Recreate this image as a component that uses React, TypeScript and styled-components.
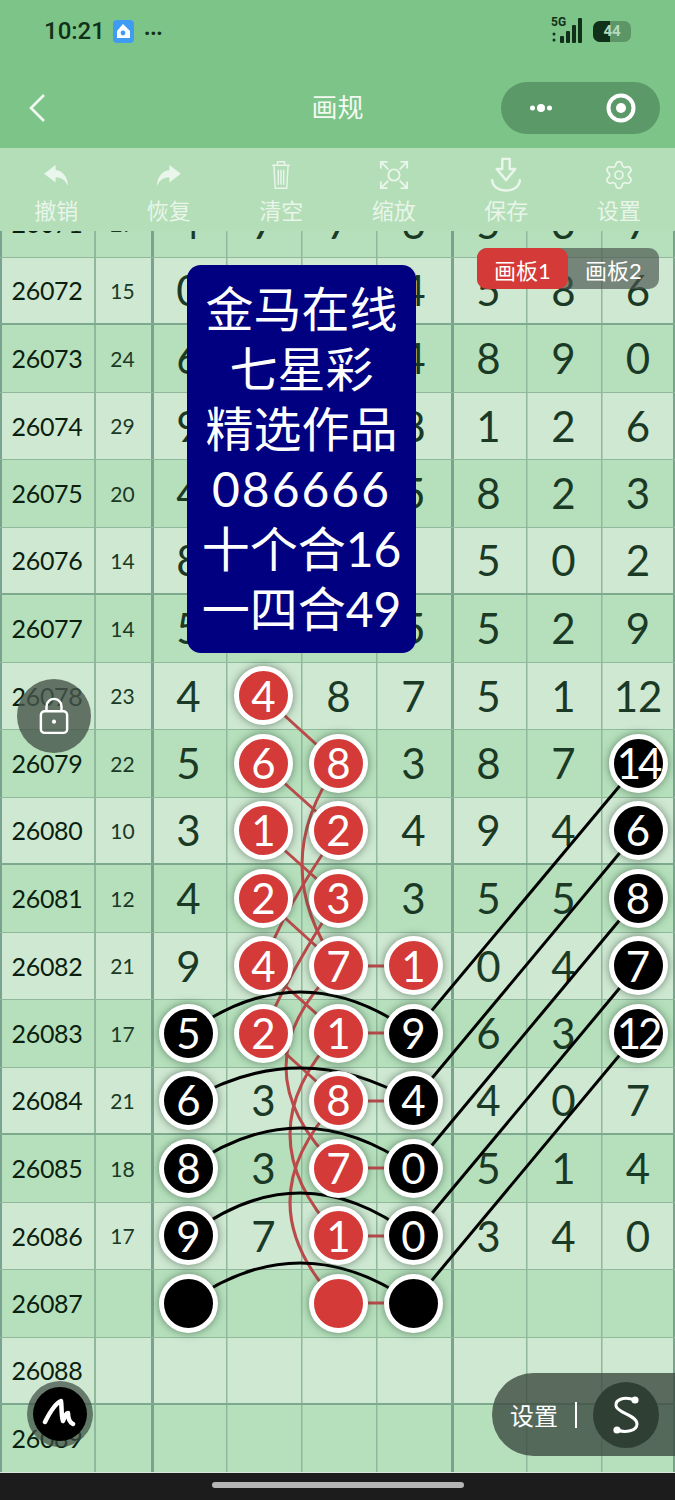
import React from 'react';
import styled, { createGlobalStyle } from 'styled-components';
import { Settings } from 'lucide-react';

const GlobalStyle = createGlobalStyle`
  html, body {
    margin: 0;
    padding: 0;
    background: #1c1c1c;
  }
  * {
    box-sizing: border-box;
  }
`;

const FONT = `Lato, "Noto Sans CJK SC", sans-serif`;

type Mark = { tone: 'red' | 'black'; value?: number };
type CellValue = number | null | Mark;

const r = (value?: number): Mark => ({ tone: 'red', value });
const k = (value?: number): Mark => ({ tone: 'black', value });

// cells under the notice are not visible, so they stay empty
const ROWS: { id: number; sum?: number; cells: CellValue[] }[] = [
  { id: 26071, sum: 27, cells: [4, 7, 7, 6, 5, 3, 7] },
  { id: 26072, sum: 15, cells: [0, null, null, 4, 5, 8, 6] },
  { id: 26073, sum: 24, cells: [6, null, null, 4, 8, 9, 0] },
  { id: 26074, sum: 29, cells: [9, null, null, 8, 1, 2, 6] },
  { id: 26075, sum: 20, cells: [4, null, null, 5, 8, 2, 3] },
  { id: 26076, sum: 14, cells: [8, null, null, null, 5, 0, 2] },
  { id: 26077, sum: 14, cells: [5, null, null, 5, 5, 2, 9] },
  { id: 26078, sum: 23, cells: [4, r(4), 8, 7, 5, 1, 12] },
  { id: 26079, sum: 22, cells: [5, r(6), r(8), 3, 8, 7, k(14)] },
  { id: 26080, sum: 10, cells: [3, r(1), r(2), 4, 9, 4, k(6)] },
  { id: 26081, sum: 12, cells: [4, r(2), r(3), 3, 5, 5, k(8)] },
  { id: 26082, sum: 21, cells: [9, r(4), r(7), r(1), 0, 4, k(7)] },
  { id: 26083, sum: 17, cells: [k(5), r(2), r(1), k(9), 6, 3, k(12)] },
  { id: 26084, sum: 21, cells: [k(6), 3, r(8), k(4), 4, 0, 7] },
  { id: 26085, sum: 18, cells: [k(8), 3, r(7), k(0), 5, 1, 4] },
  { id: 26086, sum: 17, cells: [k(9), 7, r(1), k(0), 3, 4, 0] },
  { id: 26087, cells: [k(), null, r(), k(), null, null, null] },
  { id: 26088, cells: [null, null, null, null, null, null, null] },
  { id: 26089, cells: [null, null, null, null, null, null, null] },
];

const TOOLS = ['撤销', '恢复', '清空', '缩放', '保存', '设置'];

const BOARD_TOP = 231;
const y = (pageY: number) => pageY - BOARD_TOP;

// links between the marked balls, in page coordinates
const RED_PATHS = [
  'M263 696 L338 764',
  'M263 764 L338 831',
  'M263 831 L338 898',
  'M263 898 L338 966',
  'M263 966 L338 1033',
  'M263 1033 L338 1101',
  'M338 966 L413 966',
  'M338 1033 L413 1033',
  'M338 1101 L413 1101',
  'M338 1168 L413 1168',
  'M338 1236 L413 1236',
  'M338 1303 L413 1303',
  'M338 764 Q266 865 338 966',
  'M338 831 Q282 912 263 966',
  'M338 898 Q288 975 263 1033',
  'M338 966 Q234 1067 338 1168',
  'M338 1033 Q242 1134 338 1236',
  'M338 1101 Q242 1202 338 1303',
];

const BLACK_PATHS = [
  'M188 1033 Q300 951 413 1033',
  'M188 1101 Q300 1035 413 1101',
  'M188 1168 Q300 1088 413 1168',
  'M188 1236 Q300 1150 413 1236',
  'M188 1303 Q300 1223 413 1303',
  'M413 1033 L638 764',
  'M413 1101 L638 831',
  'M413 1168 L638 898',
  'M413 1236 L638 966',
  'M413 1303 L638 1033',
];

const shift = (d: string) =>
  d.replace(/(\d+) (\d+)/g, (_, a, b) => `${a} ${y(Number(b))}`);

const BoardCell = ({ value }: { value: CellValue }) => {
  if (value === null) return null;
  if (typeof value === 'number') return <>{value}</>;
  return (
    <Ball $tone={value.tone} $wide={(value.value ?? 0) > 9}>
      {value.value}
    </Ball>
  );
};

const App: React.FC = () => {
  return (
    <Screen>
      <GlobalStyle />
      <Header>
        <StatusBar>
          <StatusLeft>
            <Clock>10:21</Clock>
            <AppBadge>
              <svg width="16" height="16" viewBox="0 0 16 16">
                <path d="M8 1 L15 8 V15 H2 V8 Z" fill="#fff" />
                <circle cx="8" cy="10" r="2.4" fill="#3f9cf2" />
              </svg>
            </AppBadge>
            <MoreDots>···</MoreDots>
          </StatusLeft>
          <StatusRight>
            <Signal>
              <SignalLabel>5G</SignalLabel>
              <svg width="36" height="26" viewBox="0 0 36 26">
                <circle cx="3" cy="16" r="1.5" fill="#10301a" />
                <circle cx="3" cy="22" r="1.5" fill="#10301a" />
                <rect x="9" y="18" width="4" height="7" rx="1" fill="#10301a" />
                <rect x="15" y="13" width="4" height="12" rx="1" fill="#10301a" />
                <rect x="21" y="7" width="4" height="18" rx="1" fill="#10301a" />
                <rect x="27" y="0" width="4" height="25" rx="1" fill="#10301a" />
              </svg>
            </Signal>
            <Battery>
              <BatteryFill style={{ width: '44%' }} />
              <BatteryText>44</BatteryText>
            </Battery>
          </StatusRight>
        </StatusBar>
        <NavBar>
          <BackButton>
            <svg width="18" height="30" viewBox="0 0 18 30">
              <path d="M16 2 L3 15 L16 28" fill="none" stroke="#f2f9f2" strokeWidth="2.6" />
            </svg>
          </BackButton>
          <Title>画规</Title>
          <Capsule>
            <svg width="22" height="10" viewBox="0 0 22 10">
              <circle cx="2.5" cy="5" r="2.5" fill="#fff" />
              <circle cx="11" cy="5" r="4" fill="#fff" />
              <circle cx="19.5" cy="5" r="2.5" fill="#fff" />
            </svg>
            <svg width="30" height="30" viewBox="0 0 30 30">
              <circle cx="15" cy="15" r="12.5" fill="none" stroke="#fff" strokeWidth="4" />
              <circle cx="15" cy="15" r="5" fill="#fff" />
            </svg>
          </Capsule>
        </NavBar>
      </Header>

      <Toolbar>
        {TOOLS.map((label, i) => (
          <Tool key={label}>
            <ToolIcon>
              {i === 0 && (
                <svg width="27" height="23" viewBox="0 0 30 26">
                  <path d="M14 1 L1 11 L14 21 V15 C20 15 25 18 28 25 C28 15 22 7 14 7 Z" fill="currentColor" />
                </svg>
              )}
              {i === 1 && (
                <svg width="27" height="23" viewBox="0 0 30 26">
                  <path d="M16 1 L29 11 L16 21 V15 C10 15 5 18 2 25 C2 15 8 7 16 7 Z" fill="currentColor" />
                </svg>
              )}
              {i === 2 && (
                <svg width="24" height="32" viewBox="0 0 26 36" fill="none" stroke="currentColor" strokeWidth="1.6">
                  <path d="M3 7 H23 M9 7 V3 H17 V7 M5 7 L6.5 33 H19.5 L21 7 M10 12 V29 M13 12 V29 M16 12 V29" />
                </svg>
              )}
              {i === 3 && (
                <svg width="30" height="30" viewBox="0 0 32 32" fill="none" stroke="currentColor" strokeWidth="2">
                  <circle cx="16" cy="16" r="6" />
                  <path d="M2 9 V2 H9 M2 2 L10 10 M23 2 H30 V9 M30 2 L22 10 M2 23 V30 H9 M2 30 L10 22 M23 30 H30 V23 M30 30 L22 22" />
                </svg>
              )}
              {i === 4 && (
                <svg width="36" height="37" viewBox="0 0 36 40" fill="none" stroke="currentColor" strokeWidth="2.6">
                  <path d="M14 2 H22 V13 H28 L18 25 L8 13 H14 Z" strokeLinejoin="round" />
                  <path d="M3 25 C4 40 32 40 33 25" strokeLinecap="round" />
                </svg>
              )}
              {i === 5 && <Settings size={32} strokeWidth={1.3} />}
            </ToolIcon>
            <ToolLabel>{label}</ToolLabel>
          </Tool>
        ))}
      </Toolbar>

      <Board>
        <Rows>
          {ROWS.map((row, index) => (
            <Row key={row.id} $dark={index % 2 === 0} $thick={row.id % 4 === 0}>
              <IdCell>{row.id}</IdCell>
              <SumCell>{row.sum}</SumCell>
              {row.cells.map((value, i) => (
                <DigitCell key={i} $thick={i === 0 || i === 4}>
                  <BoardCell value={value} />
                </DigitCell>
              ))}
            </Row>
          ))}
        </Rows>

        <Links viewBox={`0 0 675 1241`} width="675" height="1241">
          {RED_PATHS.map((d) => (
            <path key={d} d={shift(d)} fill="none" stroke="#bb4a4a" strokeWidth="3" />
          ))}
          {BLACK_PATHS.map((d) => (
            <path key={d} d={shift(d)} fill="none" stroke="#000" strokeWidth="3" />
          ))}
        </Links>

        <Notice>
          <div>金马在线</div>
          <div>七星彩</div>
          <div>精选作品</div>
          <NoticeNumber>086666</NoticeNumber>
          <div>十个合16</div>
          <div>一四合49</div>
        </Notice>

        <Tabs>
          <Tab $active>画板1</Tab>
          <Tab>画板2</Tab>
        </Tabs>

        <LockButton>
          <svg width="30" height="38" viewBox="0 0 32 40" fill="none" stroke="#fff" strokeWidth="2.6">
            <rect x="2" y="15" width="28" height="23" rx="4" />
            <path d="M8 15 V10 C8 -1 24 -1 24 10 V15" />
            <circle cx="16" cy="26" r="2.2" fill="#fff" stroke="none" />
          </svg>
        </LockButton>

        <PenButton>
          <PenInner>
            <svg width="36" height="34" viewBox="0 0 36 34" fill="none" stroke="#fff" strokeWidth="4.5" strokeLinecap="round" strokeLinejoin="round">
              <path d="M3 25 C8 15 14 6 19 4 C20 10 19 18 21 24 C23 19 24 16 26 16 C26 21 27 25 31 27" />
            </svg>
          </PenInner>
        </PenButton>

        <SettingsDock>
          <DockLabel>设置</DockLabel>
          <DockDivider />
          <DockCircle>
            <svg width="30" height="40" viewBox="0 0 30 40" fill="none" stroke="#fff" strokeWidth="3">
              <path d="M24 5 C12 1 4 5 5 11 C6 18 26 20 26 29 C26 36 14 38 7 35" />
              <circle cx="24" cy="5" r="3.6" fill="#fff" stroke="none" />
              <circle cx="6" cy="35" r="3.6" fill="#fff" stroke="none" />
            </svg>
          </DockCircle>
        </SettingsDock>
      </Board>

      <HomeBar>
        <HomeIndicator />
      </HomeBar>
    </Screen>
  );
};

export default App;

const Screen = styled.div`
  position: relative;
  width: 675px;
  height: 1500px;
  overflow: hidden;
  display: flex;
  flex-direction: column;
  font-family: ${FONT};
  background: #1c1c1c;
`;

const Header = styled.header`
  height: 148px;
  background: #7dc488;
  display: flex;
  flex-direction: column;
`;

const StatusBar = styled.div`
  height: 82px;
  padding: 18px 44px 0 44px;
  display: flex;
  justify-content: space-between;
  align-items: flex-start;
`;

const StatusLeft = styled.div`
  display: flex;
  align-items: center;
  gap: 8px;
  height: 26px;
`;

const Clock = styled.span`
  font-family: Roboto, sans-serif;
  font-size: 24px;
  font-weight: 500;
  color: #10301a;
`;

const AppBadge = styled.span`
  width: 21px;
  height: 23px;
  border-radius: 4px;
  background: #3f9cf2;
  display: flex;
  align-items: center;
  justify-content: center;
`;

const MoreDots = styled.span`
  font-size: 24px;
  font-weight: 400;
  line-height: 1;
  color: #10301a;
  margin-left: 2px;
`;

const StatusRight = styled.div`
  display: flex;
  align-items: center;
  gap: 6px;
`;

const Signal = styled.div`
  position: relative;
  width: 36px;
  height: 26px;
`;

const SignalLabel = styled.span`
  position: absolute;
  left: 0;
  top: -3px;
  font-family: Roboto, sans-serif;
  font-size: 12px;
  font-weight: 700;
  color: #10301a;
`;

const Battery = styled.div`
  position: relative;
  width: 38px;
  height: 21px;
  border-radius: 7px;
  background: #5d9666;
  overflow: hidden;
  display: flex;
  align-items: center;
  justify-content: center;
`;

const BatteryFill = styled.div`
  position: absolute;
  left: 0;
  top: 0;
  bottom: 0;
  background: #10301a;
`;

const BatteryText = styled.span`
  position: relative;
  font-family: Roboto, sans-serif;
  font-size: 15px;
  font-weight: 700;
  color: #b5d9ba;
`;

const NavBar = styled.nav`
  position: relative;
  flex: 1;
  padding: 0 15px 14px 28px;
  display: flex;
  align-items: center;
  justify-content: space-between;
`;

const BackButton = styled.div`
  display: flex;
`;

const Title = styled.h1`
  margin: -5px 0 0;
  font-size: 26px;
  font-weight: 400;
  color: #f2f9f2;
  position: absolute;
  left: 0;
  right: 0;
  text-align: center;
  pointer-events: none;
`;

const Capsule = styled.div`
  width: 159px;
  height: 52px;
  border-radius: 26px;
  background: #5b9a68;
  padding: 0 24px 0 29px;
  display: flex;
  align-items: center;
  justify-content: space-between;
`;

const Toolbar = styled.div`
  height: 83px;
  background: #b4deb7;
  display: grid;
  grid-template-columns: repeat(6, 1fr);
`;

const Tool = styled.div`
  display: flex;
  flex-direction: column;
  align-items: center;
  color: rgba(255, 255, 255, 0.72);
`;

const ToolIcon = styled.div`
  height: 48px;
  padding-top: 6px;
  display: flex;
  align-items: center;
  justify-content: center;
`;

const ToolLabel = styled.span`
  font-size: 22px;
  line-height: 30px;
`;

const Board = styled.main`
  position: relative;
  height: 1241px;
  overflow: hidden;
  background: #cfe8d2;
`;

const Rows = styled.div`
  margin-top: -41px;
  display: flex;
  flex-direction: column;
`;

const Row = styled.div<{ $dark?: boolean; $thick?: boolean }>`
  height: 67.5px;
  display: grid;
  grid-template-columns: 94px 57px repeat(6, 75px) 74px;
  background: ${(p) => (p.$dark ? '#b6e0bc' : '#cfe8d2')};
  border-bottom: ${(p) => (p.$thick ? '2.5px solid #7da98f' : '1.5px solid #8fb89c')};
  box-shadow: inset 2px 0 0 #79a38f, inset -2px 0 0 #79a38f;
  color: #1a3a26;
`;

const IdCell = styled.div`
  display: flex;
  align-items: center;
  justify-content: center;
  font-size: 25px;
  letter-spacing: -0.3px;
  color: #0a1f10;
`;

const SumCell = styled.div`
  display: flex;
  align-items: center;
  justify-content: center;
  font-size: 21px;
  box-shadow: inset 2px 0 0 #8fb89c;
`;

const DigitCell = styled.div<{ $thick?: boolean }>`
  display: flex;
  align-items: center;
  justify-content: center;
  font-size: 42px;
  font-weight: 400;
  box-shadow: inset ${(p) => (p.$thick ? '3px 0 0 #79a38f' : '1.5px 0 0 #8fb89c')};
`;

const Ball = styled.div<{ $tone: 'red' | 'black'; $wide?: boolean }>`
  position: relative;
  z-index: 2;
  flex: none;
  width: 59px;
  height: 59px;
  border-radius: 50%;
  border: 5px solid #fff;
  box-shadow: 0 0 9px rgba(40, 70, 50, 0.6);
  background: ${(p) => (p.$tone === 'red' ? '#d33a38' : '#000')};
  color: #fff;
  font-size: 42px;
  font-weight: 400;
  letter-spacing: ${(p) => (p.$wide ? '-3px' : '0')};
  display: flex;
  align-items: center;
  justify-content: center;
`;

const Links = styled.svg`
  position: absolute;
  left: 0;
  top: 0;
  z-index: 1;
  pointer-events: none;
`;

const Notice = styled.div`
  position: absolute;
  z-index: 3;
  left: 187px;
  top: 34px;
  width: 229px;
  height: 388px;
  padding-top: 14px;
  border-radius: 14px;
  background: #000080;
  color: #fff;
  font-size: 48px;
  line-height: 60px;
  text-align: center;
  white-space: nowrap;
`;

const NoticeNumber = styled.div`
  letter-spacing: 2px;
`;

const Tabs = styled.div`
  position: absolute;
  z-index: 3;
  top: 17px;
  right: 16px;
  width: 182px;
  height: 41px;
  border-radius: 10px;
  background: rgba(75, 85, 78, 0.68);
  display: grid;
  grid-template-columns: 91px 91px;
`;

const Tab = styled.div<{ $active?: boolean }>`
  border-radius: 10px;
  background: ${(p) => (p.$active ? '#d33a38' : 'transparent')};
  color: #fff;
  font-size: 22px;
  display: flex;
  align-items: center;
  justify-content: center;
`;

const LockButton = styled.div`
  position: absolute;
  z-index: 3;
  left: 17px;
  top: 448px;
  width: 74px;
  height: 74px;
  border-radius: 50%;
  background: rgba(70, 85, 75, 0.8);
  display: flex;
  align-items: center;
  justify-content: center;
`;

const PenButton = styled.div`
  position: absolute;
  z-index: 3;
  left: 27px;
  top: 1150px;
  width: 66px;
  height: 66px;
  border-radius: 50%;
  background: rgba(60, 75, 65, 0.7);
  display: flex;
  align-items: center;
  justify-content: center;
`;

const PenInner = styled.div`
  width: 54px;
  height: 54px;
  border-radius: 50%;
  background: #000;
  display: flex;
  align-items: center;
  justify-content: center;
`;

const SettingsDock = styled.div`
  position: absolute;
  z-index: 3;
  right: 0;
  top: 1142px;
  width: 183px;
  height: 83px;
  padding-left: 18px;
  border-radius: 42px 0 0 42px;
  background: rgba(60, 75, 65, 0.8);
  display: flex;
  align-items: center;
`;

const DockLabel = styled.span`
  font-size: 24px;
  color: #fff;
`;

const DockDivider = styled.span`
  width: 2px;
  height: 26px;
  margin: 0 16px 0 17px;
  background: #fff;
`;

const DockCircle = styled.div`
  width: 66px;
  height: 66px;
  border-radius: 50%;
  background: #2f3f33;
  display: flex;
  align-items: center;
  justify-content: center;
`;

const HomeBar = styled.footer`
  flex: 1;
  background: #1c1c1c;
  border-top: 1px solid #d8e8dc;
  padding-top: 9px;
  display: flex;
  justify-content: center;
`;

const HomeIndicator = styled.div`
  width: 252px;
  height: 6px;
  border-radius: 3px;
  background: #b5b5b5;
`;
